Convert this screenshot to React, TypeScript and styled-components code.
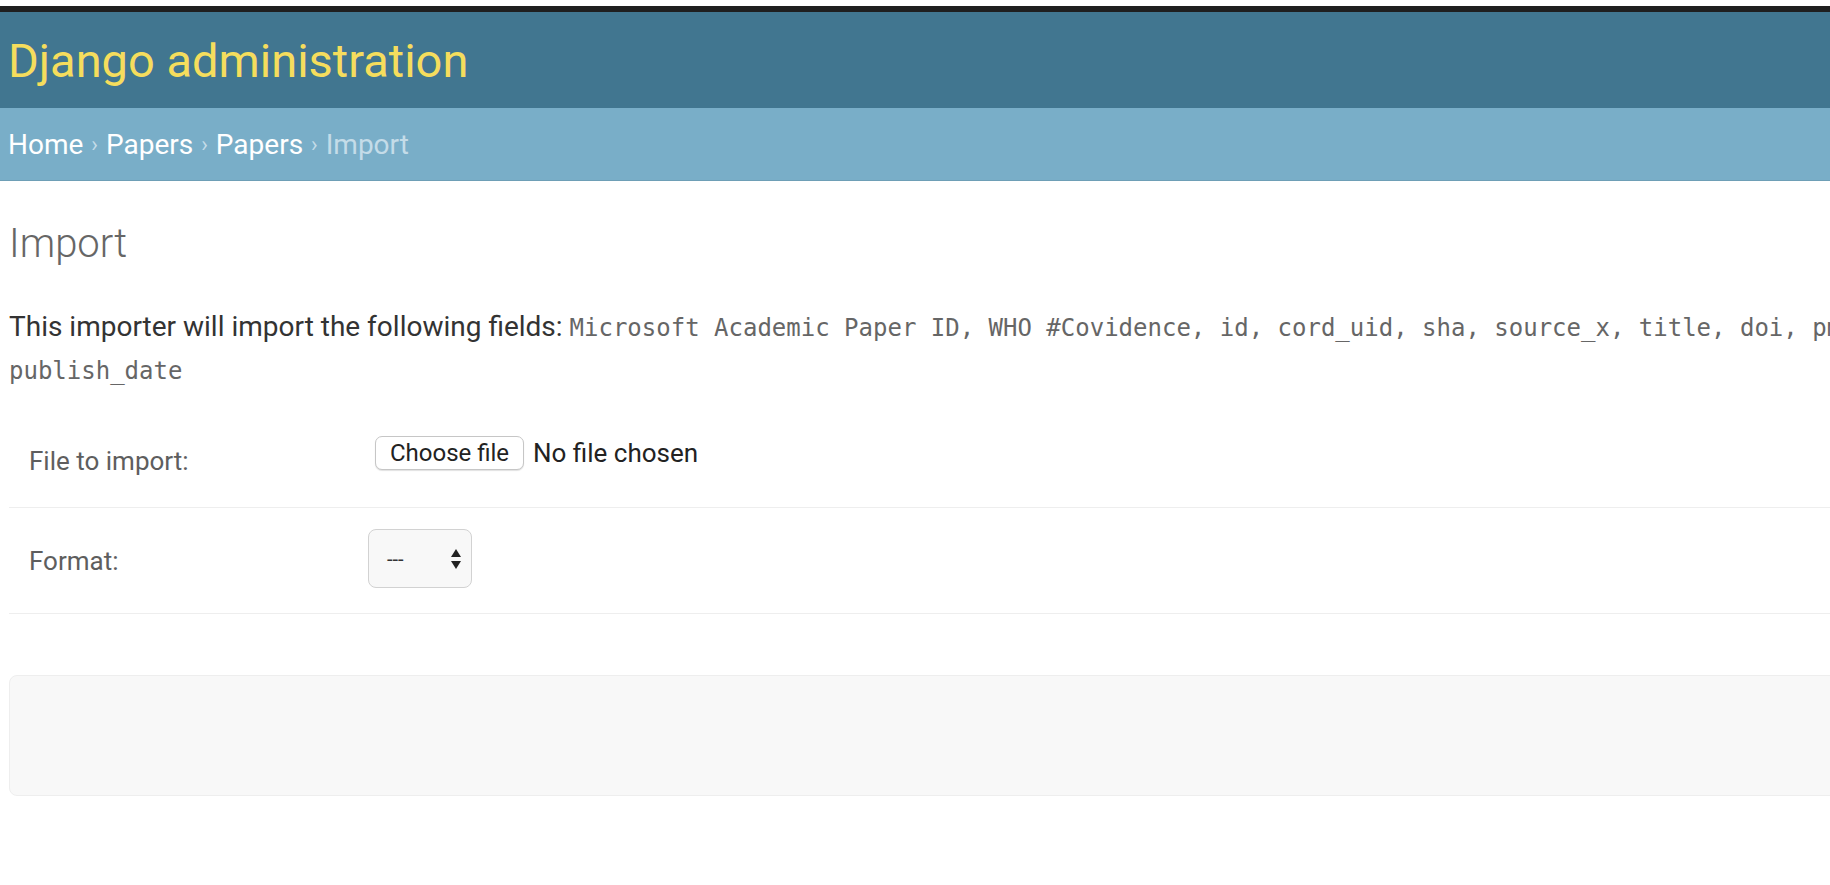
import React from 'react';
import styled, { createGlobalStyle } from 'styled-components';

const GlobalStyle = createGlobalStyle`
    html, body {
        margin: 0;
        padding: 0;
        overflow: hidden;
        background: #fff;
        font-family: Roboto, "Liberation Sans", Arial, sans-serif;
        color: #333;
    }
`;

const Page = styled.div`
    width: 2420px;  /* the real page is wider than the window, so the right side is cut */
    padding-top: 6px;
`;

const WindowEdge = styled.div`
    height: 6px;
    background: #1f1f1f;
`;

const Header = styled.header`
    height: 96px;
    display: flex;
    align-items: center;
    padding: 0 8px;
    background: #417690;
`;

const SiteName = styled.h1`
    margin: 0;
    font-size: 47px;
    font-weight: 400;
    line-height: 1;
    color: #f5dd5d;
`;

const Breadcrumbs = styled.nav`
    height: 72px;
    display: flex;
    align-items: center;
    padding: 0 8px;
    background: #79aec8;
    box-shadow: 0 1px 0 #6e9fb6;
    font-size: 28px;
    color: #c4dce8;
`;

const Crumb = styled.a`
    color: #fff;
    text-decoration: none;
`;

const Separator = styled.span`
    padding: 0 8px;
    font-size: 22px;
    color: #c4dce8;
`;

const Content = styled.main`
    padding: 0 9px;
`;

const Title = styled.h1`
    margin: 40px 0 0;
    font-size: 40px;
    font-weight: 300;
    line-height: 48px;
    color: #666;
`;

const Intro = styled.p`
    margin: 38px 0 16px;
    font-size: 28px;
    line-height: 41px;
    color: #333;
`;

const Code = styled.code`
    font-family: "DejaVu Sans Mono", "Liberation Mono", monospace;
    font-size: 24px;
    color: #666;
`;

const Fieldset = styled.fieldset`
    margin: 0;
    padding: 0;
    border: none;
`;

const Row = styled.div<{ height: number }>`
    display: flex;
    align-items: flex-start;
    height: ${props => props.height}px;
    padding: 20px 20px 0;
    box-sizing: border-box;
    border-bottom: 1px solid #eee;
`;

const Label = styled.label`
    width: 340px;
    flex-shrink: 0;
    padding-top: 15px;
    font-size: 26px;
    line-height: 36px;
    color: #5e5e5e;
`;

const FileWidget = styled.div`
    display: flex;
    align-items: center;
    margin: 8px 0 0 6px;
`;

const FileButton = styled.span`
    display: inline-flex;
    align-items: center;
    justify-content: center;
    width: 149px;
    height: 34px;
    box-sizing: border-box;
    border: 1px solid #c6c6c6;
    border-radius: 7px;
    background: #fff;
    box-shadow: 0 1px 1px rgba(0, 0, 0, 0.12);
    font-size: 24px;
    color: #222;
`;

const FileStatus = styled.span`
    margin-left: 9px;
    font-size: 26px;
    color: #222;
`;

const Select = styled.div`
    display: flex;
    align-items: center;
    justify-content: space-between;
    width: 104px;
    height: 59px;
    margin-top: 1px;
    margin-left: -1px;
    padding: 0 9px 0 18px;
    box-sizing: border-box;
    border: 1px solid #d2d2d2;
    border-radius: 8px;
    background: #f8f8f8;
    font-size: 20px;
    color: #333;
`;

const SubmitRow = styled.div`
    height: 121px;
    margin-top: 61px;
    box-sizing: border-box;
    border: 1px solid #eee;
    border-radius: 8px;
    background: #f8f8f8;
`;

const fields = [
    'Microsoft Academic Paper ID', 'WHO #Covidence', 'id', 'cord_uid', 'sha', 'source_x',
    'title', 'doi', 'pmcid', 'pubmed_id', 'license', 'abstract', 'publish_date',
];

const SelectArrows: React.FC = () => (
    <svg width="12" height="22" viewBox="0 0 12 22">
        <path d="M6 1 L11 9 H1 Z" fill="#222" />
        <path d="M6 21 L11 13 H1 Z" fill="#222" />
    </svg>
);

export default function App() {
    return (
        <Page>
            <GlobalStyle />
            <WindowEdge />
            <Header>
                <SiteName>Django administration</SiteName>
            </Header>
            <Breadcrumbs>
                <Crumb href="#">Home</Crumb>
                <Separator>›</Separator>
                <Crumb href="#">Papers</Crumb>
                <Separator>›</Separator>
                <Crumb href="#">Papers</Crumb>
                <Separator>›</Separator>
                Import
            </Breadcrumbs>
            <Content>
                <Title>Import</Title>
                <Intro>
                    This importer will import the following fields: <Code>{fields.join(', ')}</Code>
                </Intro>
                <Fieldset>
                    <Row height={100}>
                        <Label>File to import:</Label>
                        <FileWidget>
                            <FileButton>Choose file</FileButton>
                            <FileStatus>No file chosen</FileStatus>
                        </FileWidget>
                    </Row>
                    <Row height={106}>
                        <Label>Format:</Label>
                        <Select>
                            <span>---</span>
                            <SelectArrows />
                        </Select>
                    </Row>
                </Fieldset>
                <SubmitRow />
            </Content>
        </Page>
    );
}
